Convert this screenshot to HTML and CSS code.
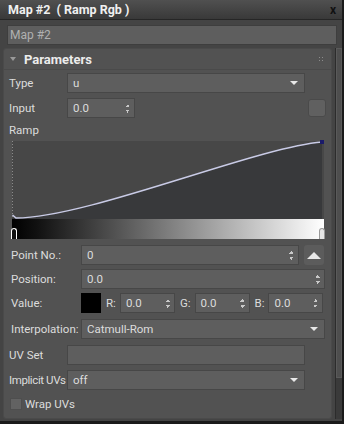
FILE: index.html
```html
<!DOCTYPE html>
<html lang="en">
<head>
    <meta charset="UTF-8">
    <title>Map #2 ( Ramp Rgb )</title>
    <link rel="stylesheet" href="styles.css">
</head>
<body>
<div class="window">
    <div class="titlebar">
        <span class="title">Map #2&nbsp; ( Ramp Rgb )</span>
        <span class="close">x</span>
    </div>

    <div class="name-field">Map #2</div>

    <div class="body">
        <div class="rollout">
            <div class="rollout-head">
                <span class="tri"></span>
                <span class="rollout-title">Parameters</span>
                <span class="grip"></span>
            </div>

            <div class="row">
                <span class="label">Type</span>
                <div class="field dropdown w-type">u<span class="arrow"></span></div>
            </div>
            <div class="row">
                <span class="label">Input</span>
                <div class="field spinner w-input">0.0<span class="spin"></span></div>
                <div class="box"></div>
            </div>
            <div class="ramp-label">Ramp</div>

            <div class="ramp">
                <svg class="curve" width="312" height="78" viewBox="0 0 312 78">
                    <path d="M0 77 C75 77 245 6 310 0 L310 78 L0 78 Z" fill="#38393b"/>
                    <line x1="0.5" y1="0" x2="0.5" y2="78" stroke="#8a8a8a" stroke-dasharray="1 2"/>
                    <path d="M0.5 74 L4 77 C75 77 245 6 310 1" fill="none" stroke="#c9cbe6" stroke-width="1.5"/>
                    <rect x="308" y="-1" width="4" height="4" fill="#1a1a6a"/>
                </svg>
                <div class="gradient">
                    <span class="handle left"></span>
                    <span class="handle right"></span>
                </div>
            </div>

            <div class="row sub">
                <span class="label wide">Point No.:</span>
                <div class="field spinner w-point">0<span class="spin"></span></div>
                <div class="up-btn"><span></span></div>
            </div>
            <div class="row sub">
                <span class="label wide">Position:</span>
                <div class="field spinner grow">0.0<span class="spin"></span></div>
            </div>
            <div class="row sub value">
                <span class="label wide">Value:</span>
                <div class="swatch"></div>
                <span class="chan">R:</span>
                <div class="field spinner w-chan">0.0<span class="spin"></span></div>
                <span class="chan">G:</span>
                <div class="field spinner w-chan">0.0<span class="spin"></span></div>
                <span class="chan">B:</span>
                <div class="field spinner w-chan">0.0<span class="spin"></span></div>
            </div>
            <div class="row sub">
                <span class="label wide">Interpolation:</span>
                <div class="field dropdown grow">Catmull-Rom<span class="arrow"></span></div>
            </div>

            <div class="row uv">
                <span class="label">UV Set</span>
                <div class="field w-type"></div>
            </div>
            <div class="row">
                <span class="label tight">Implicit UVs</span>
                <div class="field dropdown w-type">off<span class="arrow"></span></div>
            </div>
            <div class="check-row">
                <span class="check"></span>
                <span>Wrap UVs</span>
            </div>
        </div>

        <div class="scrollbar"><div class="thumb"></div></div>
    </div>
</div>
</body>
</html>
```

FILE: styles.css
```css
body {
    margin: 0;
    background: #1e1e1e;
    font-family: Roboto, "Noto Sans", sans-serif;
    font-size: 11.5px;
    color: #dcdcdc;
}
.window {
    width: 342px;
    height: 421px;
    background: #444444;
    border-right: 2px solid #1a1a1a;
    border-bottom: 3px solid #1a1a1a;
    display: flex;
    flex-direction: column;
}
.titlebar {
    height: 19px;
    background: linear-gradient(#505050, #393939);
    border-bottom: 1px solid #262626;
    display: flex;
    align-items: center;
    justify-content: space-between;
    padding: 0 6px 0 8px;
}
.title {
    font-weight: bold;
    font-size: 12.5px;
    color: #f0f0f0;
}
.close {
    font-weight: bold;
    font-size: 12px;
    color: #111;
    line-height: 1;
}
.name-field {
    margin: 5px 5px 0 7px;
    height: 18px;
    background: #5e5e5e;
    border: 1px solid #3e3e3e;
    color: #b0b0b0;
    padding-left: 2px;
    line-height: 18px;
    font-size: 12px;
}
.body {
    display: flex;
    margin-top: 3px;
    flex: 1;
    padding-bottom: 2px;
}
.rollout {
    margin-left: 3px;
    width: 326px;
    background: #525252;
    border: 1px solid #4a4a4a;
    border-radius: 3px;
    padding: 0 5px 0 5px;
}
.rollout-head {
    height: 20px;
    display: flex;
    align-items: center;
    margin: 0 -5px 3px;
    padding: 0 6px 0 6px;
    border-bottom: 1px solid #4a4a4a;
}
.tri {
    width: 0;
    height: 0;
    border-left: 3px solid transparent;
    border-right: 3px solid transparent;
    border-top: 4px solid #9a9a9a;
    margin-right: 8px;
}
.rollout-title {
    font-weight: bold;
    font-size: 13px;
    color: #ececec;
    flex: 1;
}
.grip {
    width: 7px;
    height: 7px;
    background-image: radial-gradient(#8c8c8c 0.8px, transparent 1px);
    background-size: 3px 3px;
}
.row {
    display: flex;
    align-items: center;
    height: 20px;
    margin-bottom: 5px;
}
.label {
    width: 58px;
    flex-shrink: 0;
    white-space: nowrap;
}
.label.tight {
    letter-spacing: -0.4px;
}
.label.wide {
    width: 70px;
}
.sub {
    padding-left: 2px;
    margin-bottom: 4px;
    margin-right: 1px;
}
.sub.value {
    margin-bottom: 6px;
}
.field {
    height: 20px;
    box-sizing: border-box;
    background: #5e5e5e;
    border: 1px solid #474747;
    padding-left: 5px;
    line-height: 18px;
    position: relative;
}
.w-type { width: 238px; }
.w-input { width: 68px; }
.w-point { width: 218px; }
.w-chan { width: 55px; }
.grow { flex: 1; }
.dropdown .arrow {
    position: absolute;
    right: 6px;
    top: 7px;
    width: 0;
    height: 0;
    border-left: 4px solid transparent;
    border-right: 4px solid transparent;
    border-top: 4px solid #e8e8e8;
}
.spinner .spin {
    position: absolute;
    right: 4px;
    top: 5px;
    width: 5px;
    height: 9px;
    background:
        linear-gradient(to bottom right, transparent 50%, #c8c8c8 50%) 0 0 / 3px 3px no-repeat,
        linear-gradient(to bottom left, transparent 50%, #c8c8c8 50%) 2px 0 / 3px 3px no-repeat,
        linear-gradient(to top right, transparent 50%, #c8c8c8 50%) 0 6px / 3px 3px no-repeat,
        linear-gradient(to top left, transparent 50%, #c8c8c8 50%) 2px 6px / 3px 3px no-repeat;
}
.box {
    margin-left: auto;
    margin-right: 0;
    width: 16px;
    height: 16px;
    background: #606060;
    border: 1px solid #4a4a4a;
    border-radius: 3px;
}
.ramp-label {
    height: 14px;
    line-height: 14px;
}
.ramp {
    margin: 4px 0 6px 3px;
    width: 312px;
    background: #474747;
}
.curve {
    display: block;
    overflow: visible;
}
.gradient {
    height: 20px;
    background: linear-gradient(to right, #000 0%, #111 8%, #fff 100%);
    position: relative;
}
.handle {
    position: absolute;
    bottom: 0;
    width: 4px;
    height: 10px;
    border: 1px solid #fff;
    border-bottom: none;
    border-radius: 3px 3px 0 0;
    background: #111;
}
.handle.left { left: -1px; }
.handle.right { right: -1px; background: #e6e6e6; border-color: #999; }
.up-btn {
    width: 20px;
    height: 20px;
    margin-left: 5px;
    background: #5c5c5c;
    border-radius: 3px;
    display: flex;
    align-items: center;
    justify-content: center;
}
.up-btn span {
    width: 0;
    height: 0;
    border-left: 7px solid transparent;
    border-right: 7px solid transparent;
    border-bottom: 7px solid #e8e8e8;
}
.swatch {
    width: 20px;
    height: 20px;
    background: #000;
    flex-shrink: 0;
}
.chan {
    padding: 0 4px 0 5px;
}
.uv {
    margin-top: 6px;
}
.check-row {
    display: flex;
    align-items: center;
    gap: 3px;
    padding-left: 1px;
    margin-top: 7px;
}
.check {
    width: 10px;
    height: 10px;
    background: #626262;
    border: 1px solid #4e4e4e;
}
.scrollbar {
    margin-left: 3px;
    width: 6px;
    background: #3a3a3a;
    border-left: 1px solid #2c2c2c;
    position: relative;
}
.thumb {
    height: 328px;
    background: #4e4e4e;
    border: 1px solid #5a5a5a;
}
```
